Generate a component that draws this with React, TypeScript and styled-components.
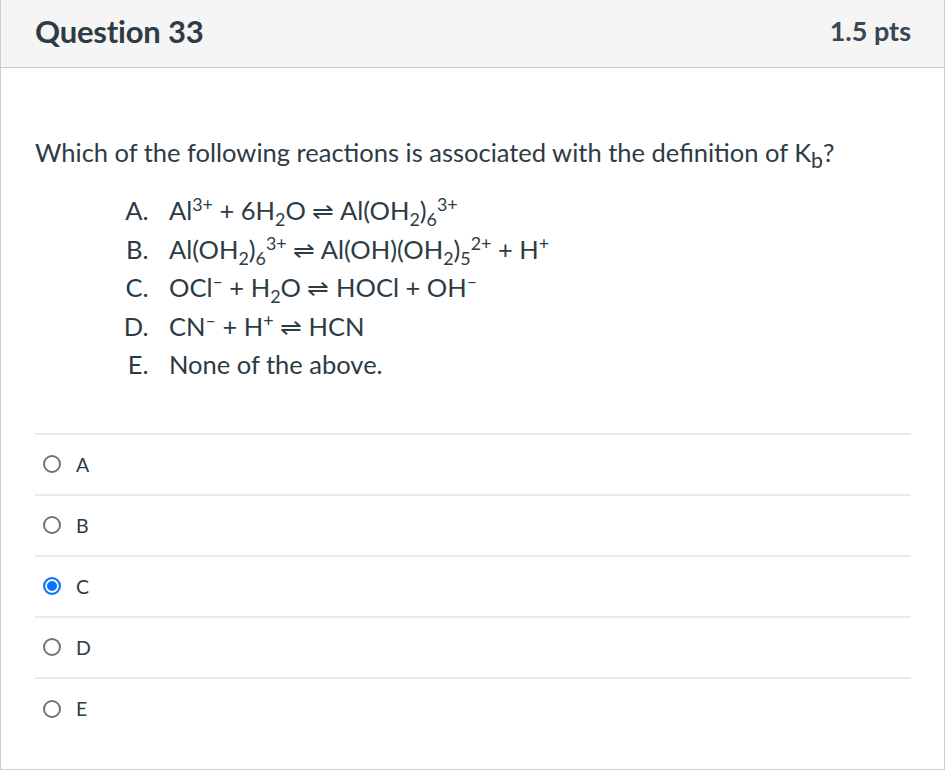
import styled, { createGlobalStyle } from 'styled-components';

const GlobalStyle = createGlobalStyle`
  body {
    margin: 0;
    background: #ffffff;
    font-family: Lato, "Noto Sans", sans-serif;
    color: #2d3b45;
  }
`;

const answers = ['A', 'B', 'C', 'D', 'E'];
const selected = 'C';

const Card = styled.section`
  width: 943px;
  border: 1px solid #c7cdd1;
  border-top: none;
  background: #ffffff;
`;

const Header = styled.header`
  display: flex;
  align-items: center;
  justify-content: space-between;
  height: 68px;
  padding: 0 33px 6px 34px;
  box-sizing: border-box;
  background: #f5f5f5;
  border-bottom: 1px solid #c7cdd1;
`;

const Title = styled.h2`
  margin: 0;
  font-size: 31px;
  font-weight: 700;
  letter-spacing: -0.2px;
`;

const Points = styled.span`
  font-size: 27px;
  font-weight: 700;
  color: #3b4650;
`;

const Body = styled.div`
  padding: 68px 33px 30px 34px;
`;

const Prompt = styled.p`
  margin: 0;
  font-size: 25.5px;
  line-height: 32px;
`;

const Reactions = styled.ol`
  list-style: upper-alpha;
  margin: 15px 0 0;
  padding-left: 120px;
  font-size: 25.5px;
  line-height: 38.5px;

  li {
    padding-left: 14px;
  }

  sup,
  sub {
    font-size: 70%;
    line-height: 0;
  }
`;

const Choices = styled.div`
  margin-top: 49px;
`;

const Choice = styled.label`
  display: flex;
  align-items: center;
  gap: 15px;
  height: 61px;
  padding-left: 8px;
  border-top: 2px solid #e8eaec;
  font-size: 19.5px;
  box-sizing: border-box;
  cursor: pointer;

  &:last-child {
    height: 62px;
  }
`;

const Radio = styled.span<{ $checked: boolean }>`
  width: 18px;
  height: 18px;
  border-radius: 50%;
  box-sizing: border-box;
  border: 2px solid ${(p) => (p.$checked ? '#0b74ff' : '#6f7478')};
  background: ${(p) => (p.$checked ? '#0b74ff' : '#ffffff')};
  box-shadow: ${(p) => (p.$checked ? 'inset 0 0 0 2px #ffffff' : 'none')};
`;

const Arrow = () => <span>&#8652;</span>;

export default function App() {
  return (
    <>
      <GlobalStyle />
      <Card>
        <Header>
          <Title>Question 33</Title>
          <Points>1.5 pts</Points>
        </Header>
        <Body>
          <Prompt>
            Which of the following reactions is associated with the definition of K<sub>b</sub>?
          </Prompt>
          <Reactions>
            <li>
              Al<sup>3+</sup> + 6H<sub>2</sub>O <Arrow /> Al(OH<sub>2</sub>)<sub>6</sub>
              <sup>3+</sup>
            </li>
            <li>
              Al(OH<sub>2</sub>)<sub>6</sub>
              <sup>3+</sup> <Arrow /> Al(OH)(OH<sub>2</sub>)<sub>5</sub>
              <sup>2+</sup> + H<sup>+</sup>
            </li>
            <li>
              OCl<sup>&#8211;</sup> + H<sub>2</sub>O <Arrow /> HOCl + OH<sup>&#8211;</sup>
            </li>
            <li>
              CN<sup>&#8211;</sup> + H<sup>+</sup> <Arrow /> HCN
            </li>
            <li>None of the above.</li>
          </Reactions>
          <Choices>
            {answers.map((a) => (
              <Choice key={a}>
                <Radio $checked={a === selected} />
                {a}
              </Choice>
            ))}
          </Choices>
        </Body>
      </Card>
    </>
  );
}
